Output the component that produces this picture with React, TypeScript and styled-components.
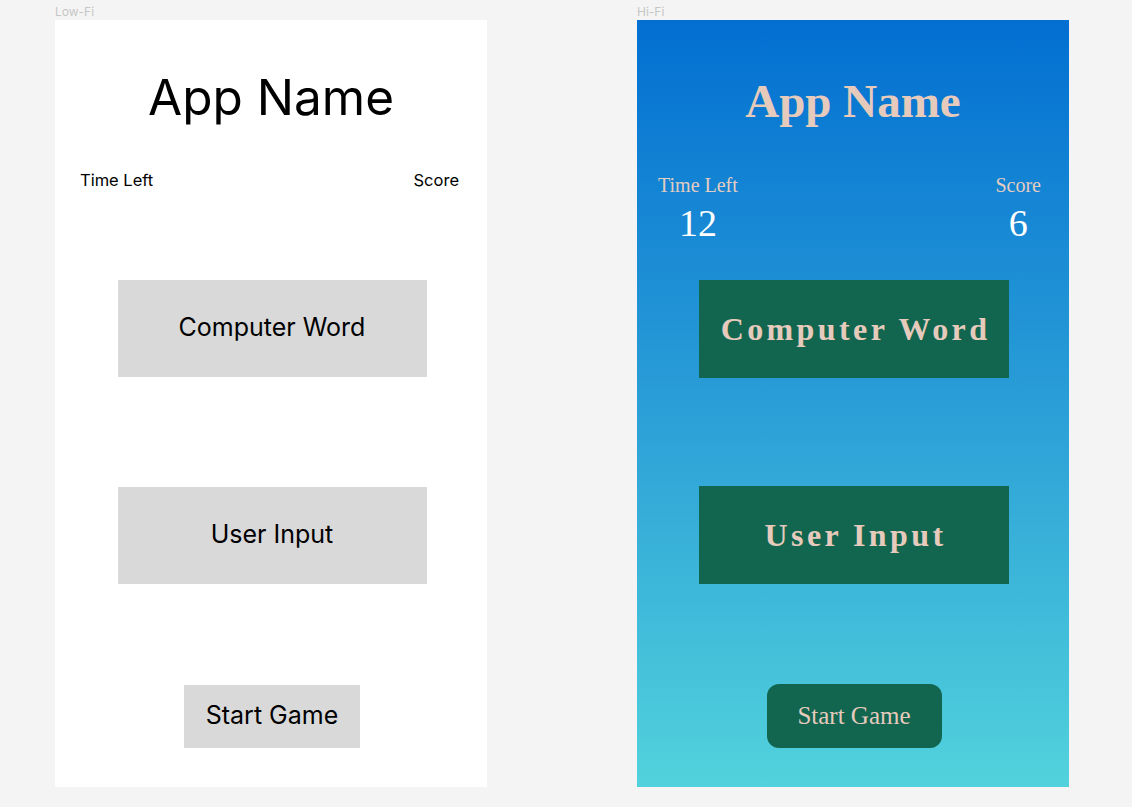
import React from "react";
import styled, { createGlobalStyle } from "styled-components";

const Global = createGlobalStyle`
  html, body { margin: 0; padding: 0; background: #f4f4f4; }
  body { font-family: Inter, "Noto Sans", sans-serif; }
  * { box-sizing: border-box; }
`;

const Canvas = styled.div`
  display: flex;
  gap: 150px;
  padding: 4px 0 0 55px;
  width: 1132px;
  height: 807px;
  overflow: hidden;
`;

const Column = styled.div`
  display: flex;
  flex-direction: column;
`;

const FrameLabel = styled.div`
  font-family: Inter, sans-serif;
  font-size: 12px;
  line-height: 16px;
  color: #c6c6c6;
`;

const LowFrame = styled.div`
  width: 432px;
  height: 767px;
  background: #ffffff;
  display: flex;
  flex-direction: column;
  align-items: center;
  padding-top: 47px;
  font-family: Inter, sans-serif;
  color: #000;
`;

const LowTitle = styled.h1`
  margin: 0;
  font-weight: 400;
  font-size: 49.5px;
  line-height: 60px;
`;

const LowStats = styled.div`
  width: 100%;
  display: flex;
  justify-content: space-between;
  padding: 0 28px 0 25px;
  margin-top: 43px;
  font-size: 16.5px;
  line-height: 20px;
`;

const LowBox = styled.div<{ $mt: number; $w: number; $h: number }>`
  margin-top: ${(p) => p.$mt}px;
  margin-left: 2px;
  width: ${(p) => p.$w}px;
  height: ${(p) => p.$h}px;
  background: #d9d9d9;
  display: flex;
  align-items: center;
  justify-content: center;
  font-size: 25px;
  line-height: 30px;
  padding-bottom: 3px;
`;

const HiFrame = styled.div`
  width: 432px;
  height: 767px;
  background: linear-gradient(180deg, #026fd1 0%, #2a9ed7 50%, #52d2dc 100%);
  display: flex;
  flex-direction: column;
  align-items: center;
  padding-top: 55px;
  font-family: "Liberation Serif", "DejaVu Serif", serif;
`;

const HiTitle = styled.h1`
  margin: 0;
  font-weight: 700;
  font-size: 47px;
  line-height: 52px;
  color: #e6cbbd;
`;

const HiStats = styled.div`
  width: 100%;
  display: flex;
  justify-content: space-between;
  padding: 0 28px 0 21px;
  margin-top: 47px;
`;

const Stat = styled.div`
  display: flex;
  flex-direction: column;
  align-items: center;
`;

const StatLabel = styled.div`
  font-size: 20px;
  line-height: 23px;
  color: #e3cdc2;
`;

const StatValue = styled.div`
  margin-top: 4px;
  font-size: 38px;
  line-height: 44px;
  color: #ffffff;
`;

const HiBox = styled.div<{ $mt: number }>`
  margin-top: ${(p) => p.$mt}px;
  margin-left: 2px;
  width: 310px;
  height: 98px;
  background: #126650;
  display: flex;
  align-items: center;
  justify-content: center;
  font-weight: 700;
  font-size: 32px;
  letter-spacing: 3.4px;
  color: #e6cbbd;
  padding-left: 3px;
`;

const HiButton = styled.div`
  margin-top: 100px;
  margin-left: 2px;
  width: 175px;
  height: 64px;
  border-radius: 12px;
  background: #126650;
  display: flex;
  align-items: center;
  justify-content: center;
  font-size: 25px;
  color: #e6cbbd;
`;

export default function App() {
  return (
    <>
      <Global />
      <Canvas>
        <Column>
          <FrameLabel>Low-Fi</FrameLabel>
          <LowFrame>
            <LowTitle>App Name</LowTitle>
            <LowStats>
              <span>Time Left</span>
              <span>Score</span>
            </LowStats>
            <LowBox $mt={90} $w={309} $h={97}>Computer Word</LowBox>
            <LowBox $mt={110} $w={309} $h={97}>User Input</LowBox>
            <LowBox $mt={101} $w={176} $h={63}>Start Game</LowBox>
          </LowFrame>
        </Column>
        <Column>
          <FrameLabel>Hi-Fi</FrameLabel>
          <HiFrame>
            <HiTitle>App Name</HiTitle>
            <HiStats>
              <Stat>
                <StatLabel>Time Left</StatLabel>
                <StatValue>12</StatValue>
              </Stat>
              <Stat>
                <StatLabel>Score</StatLabel>
                <StatValue>6</StatValue>
              </Stat>
            </HiStats>
            <HiBox $mt={35}>Computer Word</HiBox>
            <HiBox $mt={108}>User Input</HiBox>
            <HiButton>Start Game</HiButton>
          </HiFrame>
        </Column>
      </Canvas>
    </>
  );
}
